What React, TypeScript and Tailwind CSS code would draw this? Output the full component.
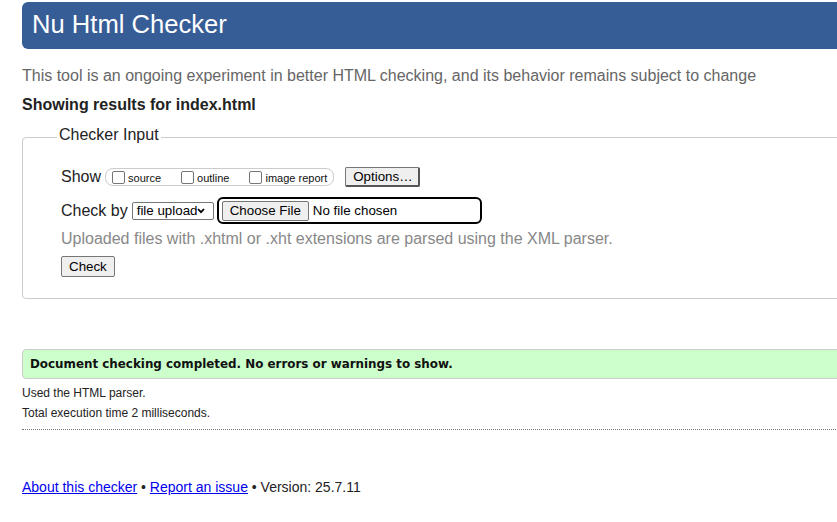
import React from "react";

function Checkbox() {
  return <span className="inline-block w-[13px] h-[13px] border border-[#767676] rounded-[2px] bg-white shrink-0" />;
}

function CheckItem({ label }: { label: string }) {
  return (
    <span className="flex items-center whitespace-nowrap">
      <Checkbox />
      <span className="ml-[3px] mt-[2px] text-[11px] leading-[13px] text-[#111]">{label}</span>
    </span>
  );
}

export default function App() {
  return (
    <div
      className="w-[837px] h-[522px] overflow-hidden bg-white text-[#222]"
      style={{ fontFamily: '"Liberation Sans", Arial, sans-serif' }}
    >
      <div className="w-[1000px] pl-[22px]">
        <div className="mt-[2px] h-[47px] rounded-l-[6px] bg-[#365d96] pl-[10px] pt-[9px]">
          <h1 className="text-[25.6px] leading-[26px] text-white font-normal">Nu Html Checker</h1>
        </div>

        <p className="mt-[17px] text-[16px] leading-[20px] text-[#666]">
          This tool is an ongoing experiment in better HTML checking, and its behavior remains subject to change
        </p>
        <p className="mt-[9px] text-[16px] leading-[20px] font-bold text-[#222]">Showing results for index.html</p>

        <div className="mt-[22px] border border-[#ccc] rounded-l-[4px] pl-[38px] pb-[20px]">
          <div className="-mt-[12px] ml-[-4px] w-fit bg-white px-[2px] text-[16px] leading-[18px] text-[#222]">
            Checker Input
          </div>

          <div className="mt-[23px] flex items-center h-[20px]">
            <span className="text-[16px] leading-[20px]">Show</span>
            <div className="ml-[4px] h-[18px] flex items-center gap-[20px] border border-[#ccc] rounded-[8px] px-[6px] shrink-0">
              <CheckItem label="source" />
              <CheckItem label="outline" />
              <CheckItem label="image report" />
            </div>
            <button className="ml-[11px] h-[20px] w-[75px] pl-[7px] text-left whitespace-nowrap bg-[#efefef] border border-[#767676] border-r-2 border-b-2 border-r-[#555] border-b-[#555] rounded-[2px] text-[13.33px] leading-[15px] text-black shrink-0">
              Options…
            </button>
          </div>

          <div className="mt-[10px] flex items-center h-[27px]">
            <span className="text-[16px] leading-[20px] whitespace-nowrap">Check by</span>
            <div className="ml-[4px] w-[82px] h-[18px] flex items-center justify-between border border-[#767676] rounded-[2px] pl-[4px] pr-[9px] bg-white shrink-0">
              <span className="text-[13.33px] leading-[15px] text-black whitespace-nowrap">file upload</span>
              <svg width="8" height="6" viewBox="0 0 8 6" className="shrink-0">
                <path d="M1 1 L4 4.2 L7 1" fill="none" stroke="#000" strokeWidth="1.8" />
              </svg>
            </div>
            <div className="ml-[3px] w-[265px] h-[27px] flex items-center border-2 border-black rounded-[6px] pl-[3px] shrink-0">
              <button className="h-[20px] px-[7px] whitespace-nowrap bg-[#efefef] border border-[#767676] rounded-[2px] text-[13.33px] leading-[15px] text-black">
                Choose File
              </button>
              <span className="ml-[4px] text-[13.33px] leading-[15px] text-black whitespace-nowrap">No file chosen</span>
            </div>
          </div>

          <p className="mt-[5px] text-[16px] leading-[20px] text-[#888]">
            Uploaded files with .xhtml or .xht extensions are parsed using the XML parser.
          </p>

          <button className="mt-[7px] h-[21px] px-[7px] bg-[#efefef] border border-[#767676] rounded-[2px] text-[13.33px] leading-[15px] text-black">
            Check
          </button>
        </div>

        <div className="mt-[50px] h-[30px] border border-[#ccc] rounded-l-[4px] bg-[#ccffcc] pl-[7px]">
          <p
            className="text-[11.9px] leading-[28px] font-bold text-[#111]"
            style={{ fontFamily: '"DejaVu Sans", Verdana, sans-serif' }}
          >
            Document checking completed. No errors or warnings to show.
          </p>
        </div>

        <p className="mt-[4px] text-[12px] leading-[20px] text-[#222]">Used the HTML parser.</p>
        <p className="text-[12px] leading-[20px] text-[#222]">Total execution time 2 milliseconds.</p>

        <div className="mt-[6px] border-t border-dotted border-[#777]" />

        <p className="mt-[47px] text-[14px] leading-[20px] text-[#222]">
          <a className="text-[#0000ee] underline" href="#">About this checker</a>
          {" • "}
          <a className="text-[#0000ee] underline" href="#">Report an issue</a>
          {" • Version: 25.7.11"}
        </p>
      </div>
    </div>
  );
}
